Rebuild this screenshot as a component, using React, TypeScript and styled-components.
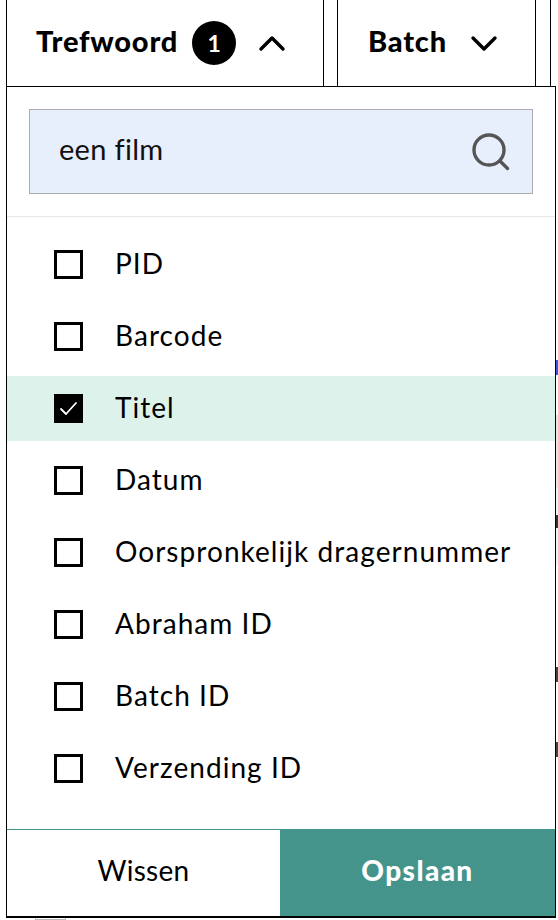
import * as React from "react";
import styled, { createGlobalStyle } from "styled-components";

const FIELDS = [
  { label: "PID", checked: false },
  { label: "Barcode", checked: false },
  { label: "Titel", checked: true },
  { label: "Datum", checked: false },
  { label: "Oorspronkelijk dragernummer", checked: false },
  { label: "Abraham ID", checked: false },
  { label: "Batch ID", checked: false },
  { label: "Verzending ID", checked: false },
];

// what is left of the page behind the popover, at its right edge
const EDGE = [
  { height: 360, color: "transparent" },
  { height: 15, color: "#3a55e0" },
  { height: 40, color: "transparent" },
  { height: 73, color: "#e6e6e6" },
  { height: 27, color: "#e6f7f3" },
  { height: 13, color: "#333333" },
  { height: 37, color: "#e6f7f3" },
  { height: 102, color: "transparent" },
  { height: 15, color: "#444444" },
  { height: 60, color: "transparent" },
  { height: 15, color: "#444444" },
];

const GlobalStyle = createGlobalStyle`
  html, body {
    margin: 0;
    padding: 0;
    background: #fff;
    overflow: hidden;
  }
  body {
    font-family: "Lato", "Open Sans", sans-serif;
    color: #000;
  }
`;

const Page = styled.div`
  width: 558px;
  height: 920px;
  display: flex;
  overflow: hidden;
`;

const Main = styled.div`
  width: 550px;
  margin-left: 6px;
  display: flex;
  flex-direction: column;
`;

const EdgeStrip = styled.div`
  width: 2px;
  display: flex;
  flex-direction: column;
`;

const EdgeBit = styled.div<{ $height: number; $color: string }>`
  height: ${(p) => p.$height}px;
  background: ${(p) => p.$color};
`;

const Toolbar = styled.div`
  height: 86px;
  display: flex;
  flex-shrink: 0;
`;

const Trigger = styled.div<{ $width: number; $pad: number; $after: number }>`
  width: ${(p) => p.$width}px;
  margin-right: ${(p) => p.$after}px;
  box-sizing: border-box;
  border-left: 1px solid #000;
  border-right: 1px solid #000;
  padding-left: ${(p) => p.$pad}px;
  display: flex;
  align-items: center;
  font-size: 29px;
  font-weight: 900;
  letter-spacing: 0.8px;
`;

const TriggerLabel = styled.span`
  padding-bottom: 5px;
`;

const NextTrigger = styled.div`
  flex: 1;
  border-left: 1px solid #000;
`;

const Badge = styled.span`
  width: 44px;
  height: 44px;
  margin-left: 14px;
  border-radius: 50%;
  background: #000;
  color: #fff;
  font-size: 23px;
  font-weight: 700;
  display: flex;
  align-items: center;
  justify-content: center;
  letter-spacing: 0;
`;

const Chevron = styled.svg<{ $left: number }>`
  width: 30px;
  height: 20px;
  margin-left: ${(p) => p.$left}px;
  fill: none;
  stroke: #000;
  stroke-width: 3.4;
  stroke-linecap: round;
  stroke-linejoin: round;
`;

const Popover = styled.div`
  width: 550px;
  height: 832px;
  box-sizing: border-box;
  border: 1px solid #000;
  border-bottom-width: 2px;
  background: #fff;
  display: flex;
  flex-direction: column;
  flex-shrink: 0;
`;

const SearchSection = styled.div`
  padding: 22px;
  border-bottom: 1px solid #e8e8e8;
`;

const SearchBox = styled.div`
  height: 85px;
  box-sizing: border-box;
  border: 1px solid #a9acb0;
  background: #e8effc;
  padding: 0 22px 0 29px;
  display: flex;
  align-items: center;
  justify-content: space-between;
  font-size: 29px;
  letter-spacing: 0.3px;
  color: #111;
`;

const SearchText = styled.span`
  padding-bottom: 6px;
`;

const SearchIcon = styled.svg`
  width: 38px;
  height: 38px;
  fill: none;
  stroke: #555;
  stroke-width: 3.4;
  stroke-linecap: round;
`;

const List = styled.div`
  flex: 1;
  padding-top: 15px;
  display: flex;
  flex-direction: column;
  gap: 7px;
`;

const Row = styled.div<{ $checked: boolean }>`
  height: 65px;
  padding-left: 47px;
  display: flex;
  align-items: center;
  gap: 32px;
  font-size: 28px;
  letter-spacing: 1.05px;
  background: ${(p) => (p.$checked ? "#def2ec" : "transparent")};
`;

const RowLabel = styled.span`
  padding-bottom: 4px;
`;

const Box = styled.span<{ $checked: boolean }>`
  width: 29px;
  height: 29px;
  box-sizing: border-box;
  border: 3px solid #000;
  background: ${(p) => (p.$checked ? "#000" : "#fff")};
  display: flex;
  align-items: center;
  justify-content: center;
  flex-shrink: 0;
`;

const Tick = styled.svg`
  width: 19px;
  height: 15px;
  fill: none;
  stroke: #fff;
  stroke-width: 1.8;
  stroke-linecap: round;
  stroke-linejoin: round;
`;

const Footer = styled.div`
  height: 86px;
  display: flex;
  flex-shrink: 0;
  border-top: 1px solid #45948c;
`;

const FooterButton = styled.div<{ $primary?: boolean }>`
  width: ${(p) => (p.$primary ? 275 : 273)}px;
  margin-top: ${(p) => (p.$primary ? -1 : 0)}px;
  padding-bottom: 6px;
  box-sizing: border-box;
  display: flex;
  align-items: center;
  justify-content: center;
  font-size: 28px;
  font-weight: ${(p) => (p.$primary ? 900 : 400)};
  letter-spacing: ${(p) => (p.$primary ? 1.4 : 0.3)}px;
  background: ${(p) => (p.$primary ? "#45948c" : "#fff")};
  color: ${(p) => (p.$primary ? "#fff" : "#000")};
`;

const BottomStrip = styled.div`
  padding-left: 29px;
`;

const BehindBox = styled.div`
  width: 29px;
  height: 1px;
  border: 1px solid #bbb;
  border-top: 0;
`;

export default function App() {
  return (
    <Page>
      <GlobalStyle />
      <Main>
        <Toolbar>
          <Trigger $width={318} $pad={29} $after={13}>
            <TriggerLabel>Trefwoord</TriggerLabel>
            <Badge>1</Badge>
            <Chevron viewBox="0 0 30 20" $left={21}>
              <path d="M4 16 L15 5 L26 16" />
            </Chevron>
          </Trigger>
          <Trigger $width={199} $pad={30} $after={14}>
            <TriggerLabel>Batch</TriggerLabel>
            <Chevron viewBox="0 0 30 20" $left={22}>
              <path d="M4 5 L15 16 L26 5" />
            </Chevron>
          </Trigger>
          <NextTrigger />
        </Toolbar>
        <Popover>
          <SearchSection>
            <SearchBox>
              <SearchText>een film</SearchText>
              <SearchIcon viewBox="0 0 38 38">
                <circle cx="17" cy="17" r="15" />
                <path d="M28 28 L35.5 35.5" />
              </SearchIcon>
            </SearchBox>
          </SearchSection>
          <List>
            {FIELDS.map((field) => (
              <Row key={field.label} $checked={field.checked}>
                <Box $checked={field.checked}>
                  {field.checked && (
                    <Tick viewBox="0 0 19 15">
                      <path d="M2 8 L7 13 L17 2" />
                    </Tick>
                  )}
                </Box>
                <RowLabel>{field.label}</RowLabel>
              </Row>
            ))}
          </List>
          <Footer>
            <FooterButton>Wissen</FooterButton>
            <FooterButton $primary>Opslaan</FooterButton>
          </Footer>
        </Popover>
        <BottomStrip>
          <BehindBox />
        </BottomStrip>
      </Main>
      <EdgeStrip>
        {EDGE.map((bit, i) => (
          <EdgeBit key={i} $height={bit.height} $color={bit.color} />
        ))}
      </EdgeStrip>
    </Page>
  );
}
